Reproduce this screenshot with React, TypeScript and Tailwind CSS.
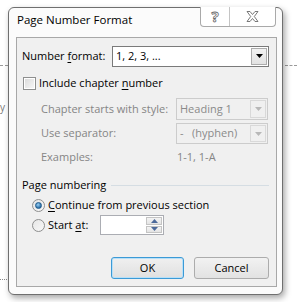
import React from 'react';

const font = { fontFamily: '"Open Sans", "Noto Sans", sans-serif' };

function ArrowDown({ color }: { color: string }) {
  return (
    <svg width="7" height="4" viewBox="0 0 7 4">
      <path d="M0 0 H7 L3.5 4 Z" fill={color} />
    </svg>
  );
}

function Dropdown({ value, disabled, width, height }: { value: string; disabled?: boolean; width: string; height: string }) {
  return (
    <div
      className={`flex items-stretch border ${width} ${height} ${
        disabled ? 'border-[#cccccc] bg-[#f0f0f0] text-[#8a8a8a]' : 'border-[#7a7a7a] bg-white text-black'
      }`}
    >
      <div className="flex-1 flex items-center pl-[3px] whitespace-pre">{value}</div>
      <div
        className={`w-[16px] m-[1px] flex items-center justify-center border ${
          disabled
            ? 'border-[#d9d9d9] bg-[#f0f0f0]'
            : 'border-[#acacac] bg-gradient-to-b from-[#f2f2f2] to-[#e2e2e2]'
        }`}
      >
        <ArrowDown color={disabled ? '#b8b8b8' : '#000000'} />
      </div>
    </div>
  );
}

function Radio({ checked }: { checked?: boolean }) {
  return (
    <div className="w-[13px] h-[13px] rounded-full border border-[#8e8f8f] bg-gradient-to-br from-[#e6e6e6] to-[#f8f8f8] flex items-center justify-center">
      {checked && (
        <div className="w-[7px] h-[7px] rounded-full bg-[radial-gradient(circle_at_40%_35%,#9ad0f5,#2a6ea6_70%)] border border-[#1f5a8c]" />
      )}
    </div>
  );
}

export default function App() {
  return (
    <div className="relative w-[297px] h-[302px] bg-white overflow-hidden text-[11px] text-black" style={font}>
      {/* page behind the dialog */}
      <div className="absolute left-0 top-[65px] w-[8px] border-t border-dashed border-[#9a9a9a]" />
      <div className="absolute left-[285px] top-[65px] w-[12px] border-t border-dashed border-[#9a9a9a]" />
      <div className="absolute left-0 top-[101px] text-[#777777] text-[10px] leading-[12px]">y</div>
      <div className="absolute left-0 top-[279px] w-[15px] border-t border-dotted border-[#8a8a8a]" />

      {/* Dialog */}
      <div className="relative ml-[8px] mt-[7px] w-[275px] h-[288px] border border-[#6f6f6f] rounded-[6px] bg-[#fbfbfb] shadow-[2px_3px_6px_rgba(0,0,0,0.35)] flex flex-col">
        {/* Title bar */}
        <div className="h-[29px] flex items-start">
          <div className="pl-[8px] pt-[5px] text-[11.5px] leading-[14px]">Page Number Format</div>
          <div className="ml-auto mr-[6px] -mt-px h-[20px] flex border border-t-0 border-[#a9a9a9] rounded-b-[4px] bg-white">
            <div className="w-[29px] flex items-center justify-center border-r border-[#c4c4c4] text-[15px] font-bold text-transparent [-webkit-text-stroke:0.8px_#6b6b6b] leading-none">
              ?
            </div>
            <div className="w-[45px] flex items-center justify-center">
              <svg width="13" height="11" viewBox="0 0 13 11">
                <path
                  d="M1 0.5 H4 L6.5 3.5 L9 0.5 H12 L8.3 5.5 L12 10.5 H9 L6.5 7.5 L4 10.5 H1 L4.7 5.5 Z"
                  fill="#ffffff"
                  stroke="#6b6b6b"
                  strokeWidth="0.9"
                />
              </svg>
            </div>
          </div>
        </div>

        {/* Content */}
        <div className="ml-[7px] mr-[5px] h-[250px] border border-[#a8a8a8] bg-[#f0f0f0] flex flex-col">
          <div className="pt-[5px] h-[26px] flex items-center">
            <div className="w-[95px] pl-[5px] pt-[5px]">
              Number <span className="underline underline-offset-2">f</span>ormat:
            </div>
            <div className="mt-[5px]">
              <Dropdown value="1, 2, 3, ..." width="w-[157px]" height="h-[21px]" />
            </div>
          </div>

          <div className="mt-[13px] h-[13px] flex items-center">
            <div className="ml-[6px] w-[13px] h-[13px] border border-[#8e8f8f] bg-white p-[1px]">
              <div className="w-full h-full bg-gradient-to-br from-[#dcdcdc] to-[#f6f6f6]" />
            </div>
            <div className="ml-[3px]">
              Include chapter <span className="underline underline-offset-2">n</span>umber
            </div>
          </div>

          <div className="mt-[8px] h-[22px] flex items-center text-[#858585]">
            <div className="w-[159px] pl-[24px]">Chapter starts with style:</div>
            <Dropdown value="Heading 1" disabled width="w-[92px]" height="h-[22px]" />
          </div>

          <div className="mt-[3px] h-[21px] flex items-center text-[#858585]">
            <div className="w-[159px] pl-[24px]">Use separator:</div>
            <Dropdown value={'-   (hyphen)'} disabled width="w-[92px]" height="h-[21px]" />
          </div>

          <div className="mt-[3px] h-[20px] flex items-center text-[#858585]">
            <div className="w-[159px] pl-[24px]">Examples:</div>
            <div className="pl-[1px]">1-1, 1-A</div>
          </div>

          <div className="mt-[10px] h-[16px] flex items-center">
            <div className="pl-[5px]">Page numbering</div>
            <div className="ml-[5px] mr-[7px] flex-1 border-t border-[#d5dde3]" />
          </div>

          <div className="mt-[2px] h-[20px] flex items-center">
            <div className="ml-[15px]">
              <Radio checked />
            </div>
            <div className="ml-[3px]">
              <span className="underline underline-offset-2">C</span>ontinue from previous section
            </div>
          </div>

          <div className="h-[20px] flex items-center">
            <div className="ml-[15px]">
              <Radio />
            </div>
            <div className="ml-[3px] w-[52px]">
              Start <span className="underline underline-offset-2">a</span>t:
            </div>
            <div className="w-[64px] h-[20px] border border-[#abadb3] bg-white flex justify-end">
              <div className="w-[16px] flex flex-col m-px gap-px">
                <div className="flex-1 flex items-center justify-center border border-[#c4c4c4] bg-gradient-to-b from-[#f4f4f4] to-[#e4e4e4]">
                  <svg width="7" height="4" viewBox="0 0 7 4">
                    <path d="M0 4 H7 L3.5 0 Z" fill="#4d6a9a" />
                  </svg>
                </div>
                <div className="flex-1 flex items-center justify-center border border-[#c4c4c4] bg-gradient-to-b from-[#f4f4f4] to-[#e4e4e4]">
                  <ArrowDown color="#4d6a9a" />
                </div>
              </div>
            </div>
          </div>

          <div className="mt-[22px] h-[22px] flex">
            <button className="ml-[94px] w-[73px] h-[22px] rounded-[3px] border border-[#3c9ad6] shadow-[inset_0_0_0_1px_#b8e0f8] bg-gradient-to-b from-[#f0f0f0] to-[#e0e0e0] text-black">
              OK
            </button>
            <button className="ml-[10px] w-[75px] h-[22px] rounded-[3px] border border-[#acacac] bg-gradient-to-b from-[#f2f2f2] to-[#e2e2e2] text-black">
              Cancel
            </button>
          </div>
        </div>
      </div>
    </div>
  );
}
